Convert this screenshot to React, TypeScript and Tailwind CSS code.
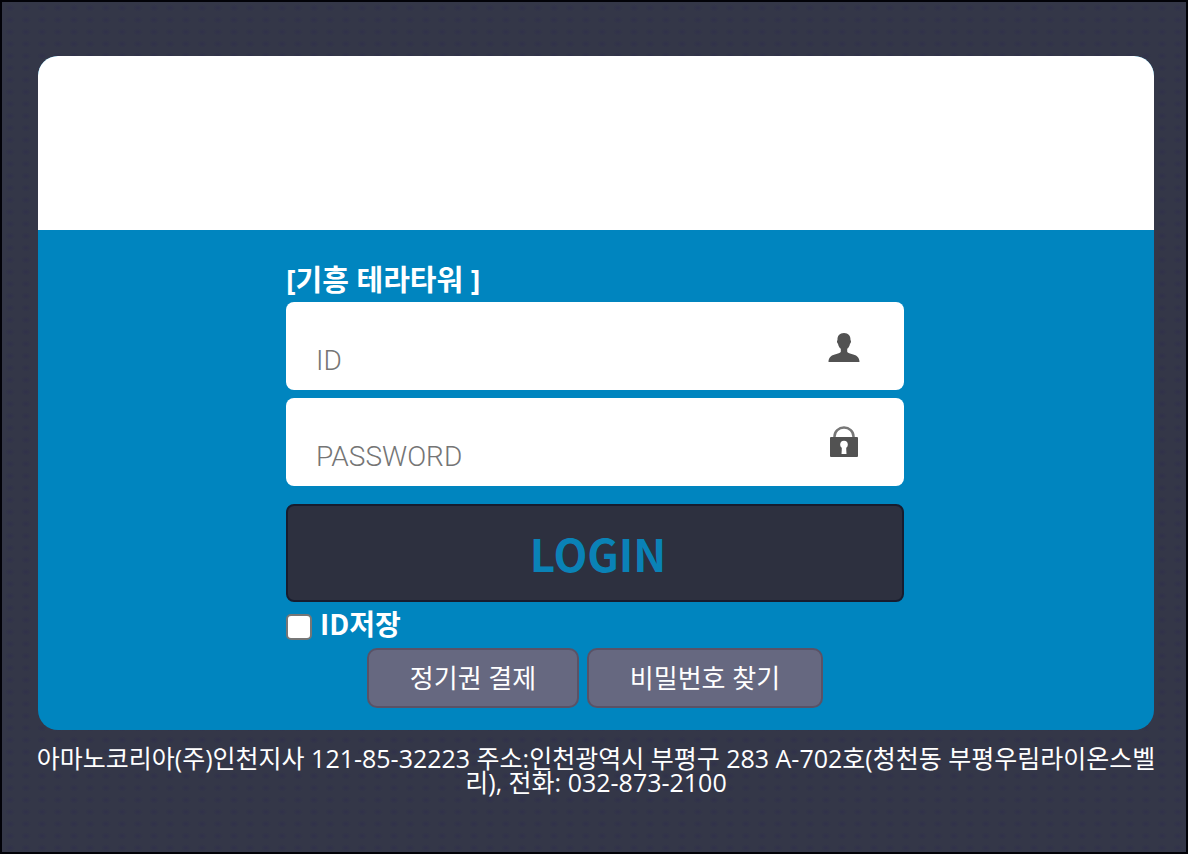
import React, { useState } from 'react';

const UserIcon: React.FC = () => (
    <svg width="32" height="34" viewBox="0 -4 32 34" fill="#525252" aria-hidden="true">
        <path d="M16 0c-4.400 0-6.800 2.900-6.500 7.200-.9.3-.6 2.700.5 3.600.5 2.400 1.400 4 2.800 5v3c-.5 1.100-2 1.500-4.400 2.100C4 22 .5 23.500.5 29h31c0-5.500-3.500-7-7.900-8.100-2.400-.6-3.900-1-4.400-2.100v-3c1.400-1 2.300-2.600 2.800-5 1.100-.9 1.400-3.300.5-3.600.3-4.300-2.100-7.200-6.500-7.200z" />
    </svg>
);

const LockIcon: React.FC = () => (
    <svg width="30" height="32" viewBox="0 0 30 32" aria-hidden="true">
        <path d="M5.500 12v-1.500a9.500 9 0 0 1 19 0V12" fill="none" stroke="#777" strokeWidth="2.500" />
        <rect x="1" y="11" width="28" height="20" rx="1" fill="#525252" />
        <circle cx="15" cy="18.500" r="3.800" fill="#fff" />
        <path d="M13 19h4l.5 9h-5z" fill="#fff" />
    </svg>
);

interface FieldProps {
    type: string;
    placeholder: string;
    value: string;
    onChange: (value: string) => void;
    icon: React.ReactNode;
}

const Field: React.FC<FieldProps> = ({ type, placeholder, value, onChange, icon }) => (
    <div className="flex h-[88px] items-center rounded-lg bg-white pr-11 pl-[30px]">
        <input
            type={type}
            value={value}
            placeholder={placeholder}
            aria-label={placeholder}
            onChange={e => onChange(e.target.value)}
            className="h-full min-w-0 flex-1 bg-transparent pt-7 font-['Roboto','Noto_Sans_CJK_KR',sans-serif] text-[28px] font-light text-[#333] outline-none placeholder:text-[#757575]"
        />
        <span className="flex w-8 justify-center">{icon}</span>
    </div>
);

const linkButton = 'h-[60px] rounded-[10px] border-2 border-[#5a5266] bg-[#666880] text-[26px] text-white';

export default function App() {
    const [userId, setUserId] = useState('');
    const [password, setPassword] = useState('');
    const [saveId, setSaveId] = useState(false);

    return (
        <div className="min-h-screen border-2 border-[#020208] bg-[#343748] bg-[radial-gradient(#31324a_1px,transparent_5px)] bg-[size:16px_12px] pt-[54px] pr-8 pl-9 font-['Open_Sans','Noto_Sans_CJK_KR',sans-serif]">
            <main className="overflow-hidden rounded-[20px] bg-[#0085bf]">
                <div className="h-[174px] bg-white" />
                <form className="mx-auto w-[620px] max-w-full pt-[34px] pr-0.5 pb-[22px]" onSubmit={e => e.preventDefault()}>
                    <h1 className="h-[38px] text-[29px] leading-8 font-bold text-white">[기흥 테라타워 ]</h1>
                    <div className="space-y-2">
                        <Field type="text" placeholder="ID" value={userId} onChange={setUserId} icon={<UserIcon />} />
                        <Field type="password" placeholder="PASSWORD" value={password} onChange={setPassword} icon={<LockIcon />} />
                    </div>
                    <button type="submit" className="mt-[18px] h-[98px] w-full rounded-lg border-2 border-[#171c2e] bg-[#2d303f] pl-1.5 font-['Noto_Sans_CJK_KR',sans-serif] text-[44px] font-bold text-[#0a82b6]">
                        LOGIN
                    </button>
                    <label className="flex h-[46px] items-center gap-2 pb-1 font-['Noto_Sans_CJK_KR',sans-serif] text-[28px] font-bold text-white">
                        <input
                            type="checkbox"
                            checked={saveId}
                            onChange={e => setSaveId(e.target.checked)}
                            className="mt-2 size-[26px] appearance-none rounded-[5px] border-2 border-[#767676] bg-white checked:bg-[#2d303f]"
                        />
                        ID저장
                    </label>
                    <div className="flex justify-center gap-2">
                        <button type="button" className={`${linkButton} w-[212px]`}>정기권 결제</button>
                        <button type="button" className={`${linkButton} w-[236px]`}>비밀번호 찾기</button>
                    </div>
                </form>
            </main>
            <footer className="-mx-1 mt-4 text-center text-[25px] leading-6 break-all text-white">
                아마노코리아(주)인천지사 121-85-32223 주소:인천광역시 부평구 283 A-702호(청천동 부평우림라이온스벨리), 전화: 032-873-2100
            </footer>
        </div>
    );
}
